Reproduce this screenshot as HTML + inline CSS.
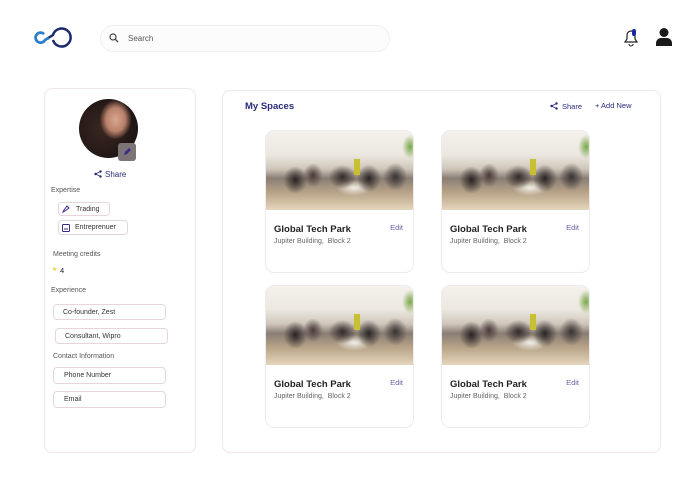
<!DOCTYPE html>
<html><head><style>
*{box-sizing:border-box;margin:0;padding:0}
body{width:700px;height:488px;background:#fff;font-family:"Liberation Sans",sans-serif;position:relative;overflow:hidden;color:#222}
.a{position:absolute}
.panel{border:1px solid #f0e6ea;border-radius:8px;background:#fff}
.lbl{font-size:7px;color:#555}
.box{position:absolute;border:1px solid #e6d5dc;border-radius:4px;font-size:7px;color:#333;padding-left:9px;display:flex;align-items:center;background:#fff}
.card{position:absolute;width:149px;height:143px;border:1px solid #ececec;border-radius:9px;overflow:hidden;background:#fff}
.img{height:79px;background:
 radial-gradient(ellipse 12px 14px at 20% 62%,#2a2424 0,#2a242400 100%),
 radial-gradient(ellipse 10px 12px at 32% 56%,#4a3a3a 0,#4a3a3a00 100%),
 radial-gradient(ellipse 14px 12px at 52% 58%,#332c2c 0,#332c2c00 100%),
 radial-gradient(ellipse 12px 14px at 70% 60%,#2a2626 0,#2a262600 100%),
 radial-gradient(ellipse 12px 14px at 88% 58%,#3a3434 0,#3a343400 100%),
 radial-gradient(ellipse 18px 8px at 60% 72%,#f2efe8 0,#f2efe800 100%),
 radial-gradient(ellipse 8px 12px at 98% 20%,#7aa84a 0,#7aa84a00 100%),
 linear-gradient(#f4f1ec 0,#ece8e0 30%,#cfc6ba 48%,#8a7e74 60%,#b8a488 78%,#e6d6bc 100%);position:relative}
.img:after{content:"";position:absolute;left:88px;top:28px;width:6px;height:16px;background:#c8c030}
.t{position:absolute;left:8px;top:93px;font-size:9.5px;font-weight:bold;color:#222}
.s{position:absolute;left:8px;top:107px;font-size:7px;color:#666}
.e{position:absolute;right:10px;top:92px;font-size:7.5px;color:#6a5fa8}
</style></head><body>
<svg class="a" style="left:32px;top:25px" width="42" height="24" viewBox="0 0 42 24"><path d="M12 9a5 5 0 1 0 1 6l8-5a9 9 0 1 1 0 5" fill="none" stroke="#1a2a6e" stroke-width="2.5"/><path d="M12 9a5 5 0 1 0 1 6l4-2" fill="none" stroke="#2a7fd0" stroke-width="2.5"/></svg>
<div class="a" style="left:100px;top:25px;width:290px;height:27px;border:1px solid #f0eef2;border-radius:14px;background:#fdfcfd"></div>
<svg class="a" style="left:109px;top:33px" width="10" height="10" viewBox="0 0 10 10"><circle cx="4" cy="4" r="3" fill="none" stroke="#444" stroke-width="1.2"/><path d="M6.3 6.3 9 9" stroke="#444" stroke-width="1.3"/></svg>
<div class="a" style="left:128px;top:34px;font-size:8px;color:#555">Search</div>
<svg class="a" style="left:622px;top:27px" width="18" height="20" viewBox="0 0 18 20"><path d="M3 15h12l-2-3V8a4 4 0 0 0-8 0v4z" fill="none" stroke="#222" stroke-width="1.2"/><path d="M7 17a2 2 0 0 0 4 0" fill="none" stroke="#222" stroke-width="1.1"/><rect x="10" y="2" width="4" height="7" rx="2" fill="#1a2aa0"/></svg>
<svg class="a" style="left:656px;top:27px" width="16" height="19" viewBox="0 0 16 19"><circle cx="8" cy="5.5" r="4.5" fill="#1a1a1a"/><path d="M0 19v-3a5 5 0 0 1 5-5h6a5 5 0 0 1 5 5v3z" fill="#1a1a1a"/></svg>

<div class="a panel" style="left:44px;top:88px;width:152px;height:365px"></div>
<div class="a" style="left:79px;top:99px;width:59px;height:59px;border-radius:50%;background:radial-gradient(ellipse 16px 20px at 62% 35%,#d9a68e 0,#b8806a 60%,#b8806a00 100%),radial-gradient(circle at 40% 50%,#3a2620 0,#1c1414 80%)"></div>
<div class="a" style="left:118px;top:143px;width:18px;height:18px;border-radius:3px;background:#7c7476"></div>
<svg class="a" style="left:122px;top:147px" width="10" height="10" viewBox="0 0 10 10"><path d="M2 8l1-3 4-4 2 2-4 4z" fill="#3a2a8a"/></svg>
<svg class="a" style="left:94px;top:170px" width="8" height="8" viewBox="0 0 8 8"><circle cx="6.5" cy="1.5" r="1.2" fill="#2a2a7a"/><circle cx="1.5" cy="4" r="1.2" fill="#2a2a7a"/><circle cx="6.5" cy="6.5" r="1.2" fill="#2a2a7a"/><path d="M6.5 1.5 1.5 4 6.5 6.5" stroke="#2a2a7a" stroke-width=".8" fill="none"/></svg>
<div class="a" style="left:105px;top:170px;font-size:8px;color:#2a2a7a">Share</div>
<div class="a lbl" style="left:51px;top:187px">Expertise</div>
<div class="box" style="left:58px;top:202px;width:52px;height:14px;padding-left:17px">Trading</div>
<svg class="a" style="left:62px;top:205px" width="8" height="8" viewBox="0 0 8 8"><path d="M1 7l1-2 3-4 2 2-4 3z" fill="none" stroke="#3a2a8a" stroke-width="1"/></svg>
<div class="box" style="left:58px;top:220px;width:70px;height:15px;padding-left:16px">Entreprenuer</div>
<svg class="a" style="left:62px;top:224px" width="8" height="8" viewBox="0 0 8 8"><rect x=".5" y=".5" width="7" height="7" rx="1" fill="none" stroke="#3a2a8a"/><path d="M2 5h4" stroke="#3a2a8a"/></svg>
<div class="a lbl" style="left:53px;top:251px">Meeting credits</div>
<div class="a" style="left:52px;top:266px;font-size:6px;color:#e8d020">★</div>
<div class="a" style="left:60px;top:266px;font-size:7.5px">4</div>
<div class="a lbl" style="left:51px;top:287px">Experience</div>
<div class="box" style="left:53px;top:304px;width:113px;height:16px">Co-founder, Zest</div>
<div class="box" style="left:55px;top:328px;width:113px;height:16px">Consultant, Wipro</div>
<div class="a lbl" style="left:53px;top:353px">Contact Information</div>
<div class="box" style="left:53px;top:367px;width:113px;height:17px;padding-left:10px">Phone Number</div>
<div class="box" style="left:53px;top:391px;width:113px;height:17px;padding-left:10px">Email</div>

<div class="a panel" style="left:222px;top:90px;width:439px;height:363px"></div>
<div class="a" style="left:245px;top:101px;font-size:9.5px;font-weight:bold;color:#2a2a7a">My Spaces</div>
<svg class="a" style="left:550px;top:102px" width="8" height="8" viewBox="0 0 8 8"><circle cx="6.5" cy="1.5" r="1.2" fill="#2a2a7a"/><circle cx="1.5" cy="4" r="1.2" fill="#2a2a7a"/><circle cx="6.5" cy="6.5" r="1.2" fill="#2a2a7a"/><path d="M6.5 1.5 1.5 4 6.5 6.5" stroke="#2a2a7a" stroke-width=".8" fill="none"/></svg>
<div class="a" style="left:562px;top:102px;font-size:7.5px;color:#2a2a7a">Share</div>
<div class="a" style="left:595px;top:101px;font-size:7.5px;color:#2a2a7a">+ Add New</div>

<div class="card" style="left:265px;top:130px"><div class="img"></div><div class="t">Global Tech Park</div><div class="s">Jupiter Building,&nbsp; Block 2</div><div class="e">Edit</div></div>
<div class="card" style="left:441px;top:130px"><div class="img"></div><div class="t">Global Tech Park</div><div class="s">Jupiter Building,&nbsp; Block 2</div><div class="e">Edit</div></div>
<div class="card" style="left:265px;top:285px"><div class="img"></div><div class="t">Global Tech Park</div><div class="s">Jupiter Building,&nbsp; Block 2</div><div class="e">Edit</div></div>
<div class="card" style="left:441px;top:285px"><div class="img"></div><div class="t">Global Tech Park</div><div class="s">Jupiter Building,&nbsp; Block 2</div><div class="e">Edit</div></div>
</body></html>
